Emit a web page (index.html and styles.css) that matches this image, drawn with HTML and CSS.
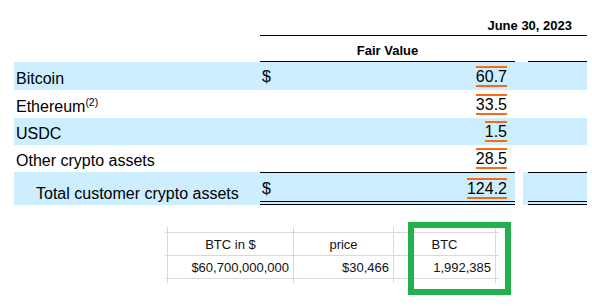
FILE: index.html
```html
<!DOCTYPE html>
<html lang="en">
<head>
<meta charset="utf-8">
<title>Customer crypto assets</title>
<link rel="stylesheet" href="styles.css">
</head>
<body>
<section class="fin">
  <div class="row head1"><div class="c-date">June 30, 2023</div></div>
  <div class="row head2"><div class="c-fv">Fair Value</div><div class="c-last"></div></div>

  <div class="row body blue">
    <div class="lbl"><span>Bitcoin</span></div><div class="gap"></div>
    <div class="amt"><span class="cur">$</span><span class="num">60.7</span></div>
    <div class="gap2"></div><div class="last"></div>
  </div>
  <div class="row body">
    <div class="lbl"><span>Ethereum<sup class="note">(2)</sup></span></div><div class="gap"></div>
    <div class="amt"><span class="cur"></span><span class="num">33.5</span></div>
    <div class="gap2"></div><div class="last"></div>
  </div>
  <div class="row body short blue">
    <div class="lbl"><span>USDC</span></div><div class="gap"></div>
    <div class="amt"><span class="cur"></span><span class="num">1.5</span></div>
    <div class="gap2"></div><div class="last"></div>
  </div>
  <div class="row body short">
    <div class="lbl"><span>Other crypto assets</span></div><div class="gap"></div>
    <div class="amt"><span class="cur"></span><span class="num">28.5</span></div>
    <div class="gap2"></div><div class="last"></div>
  </div>
  <div class="row body total blue">
    <div class="lbl"><span>Total customer crypto assets</span></div><div class="gap"></div>
    <div class="amt"><span class="cur">$</span><span class="num">124.2</span></div>
    <div class="gap2"></div><div class="last"></div>
  </div>
</section>

<section class="calc">
  <div class="sheet">
    <div class="s"></div><div class="s"></div><div class="s"></div><div class="s"></div><div class="s"></div>
    <div class="s"></div><div class="cell hd">BTC in $</div><div class="cell hd">price</div><div class="cell hd">BTC</div><div class="s"></div>
    <div class="s"></div><div class="cell v">$60,700,000,000</div><div class="cell v">$30,466</div><div class="cell v">1,992,385</div><div class="s"></div>
    <div class="s"></div><div class="s"></div><div class="s"></div><div class="s"></div><div class="s"></div>
  </div>
  <div class="mark"></div>
</section>
</body>
</html>
```

FILE: styles.css
```css
* { box-sizing: border-box; }

html, body {
  margin: 0;
  padding: 0;
  background: #ffffff;
}

body {
  width: 592px;
  height: 308px;
  overflow: hidden;
  font-family: "Liberation Sans", Arial, sans-serif;
  color: #000;
}

/* ---------- financial table ---------- */
.fin {
  margin-left: 14px;
  width: 573px;
}

.row {
  display: grid;
  grid-template-columns: 238px 8px 255px 13px 59px;
}

.head1 { height: 36px; }

.c-date {
  grid-column: 3 / 6;
  border-bottom: 1px solid #000;
  font-weight: bold;
  font-size: 13px;
  display: flex;
  align-items: flex-end;
  justify-content: flex-end;
  padding: 0 15px 2px 0;
}

.head2 { height: 26px; }

.c-fv {
  grid-column: 3;
  border-bottom: 1px solid #000;
  font-weight: bold;
  font-size: 13px;
  display: flex;
  align-items: flex-end;
  justify-content: center;
  padding-bottom: 3px;
}

.c-last {
  grid-column: 5;
  border-bottom: 1px solid #000;
}

.body {
  height: 28px;
  font-size: 16px;
}

.body.short { height: 27px; }

.blue { background: #cceeff; }

.lbl {
  display: flex;
  align-items: flex-end;
  padding: 0 0 2px 2px;
  white-space: nowrap;
}

.note {
  font-size: 10.5px;
  vertical-align: 6px;
  line-height: 0;
}

.amt {
  display: flex;
  justify-content: space-between;
  align-items: flex-end;
  padding: 0 8px 3px 2px;
}

.cur,
.num {
  display: inline-block;
  line-height: 16px;
  padding-top: 1px;
  border-top: 2px solid transparent;
  border-bottom: 2px solid transparent;
}

.num {
  border-top-color: #fa6a14;
  border-bottom-color: #fa6a14;
}

.total { height: 33px; }

.total .lbl { padding-left: 22px; }

.total .amt,
.total .last {
  border-top: 1px solid #000;
  border-bottom: 4px double #000;
}

.total .amt { padding-bottom: 2px; }

.total .gap2 {
  background: linear-gradient(to right, #ffffff 8px, transparent 8px);
}

/* ---------- spreadsheet calc ---------- */
.calc {
  position: relative;
  margin: 22px 0 0 165px;
  width: 334px;
}

.sheet {
  display: grid;
  grid-template-columns: 2px 125px 99px 101px 3px;
  grid-template-rows: 5px 22px 22px 4px;
  gap: 1px;
  background: #d9d9d9;
  font-size: 13px;
  color: #111;
}

.s,
.cell { background: #ffffff; }

.cell {
  display: flex;
  align-items: center;
  white-space: nowrap;
}

.hd { justify-content: center; }

.v {
  justify-content: flex-end;
  padding-right: 4px;
}

.mark {
  position: absolute;
  left: 243px;
  top: -5px;
  width: 103px;
  height: 73px;
  border: 6px solid #22b14c;
}
```
